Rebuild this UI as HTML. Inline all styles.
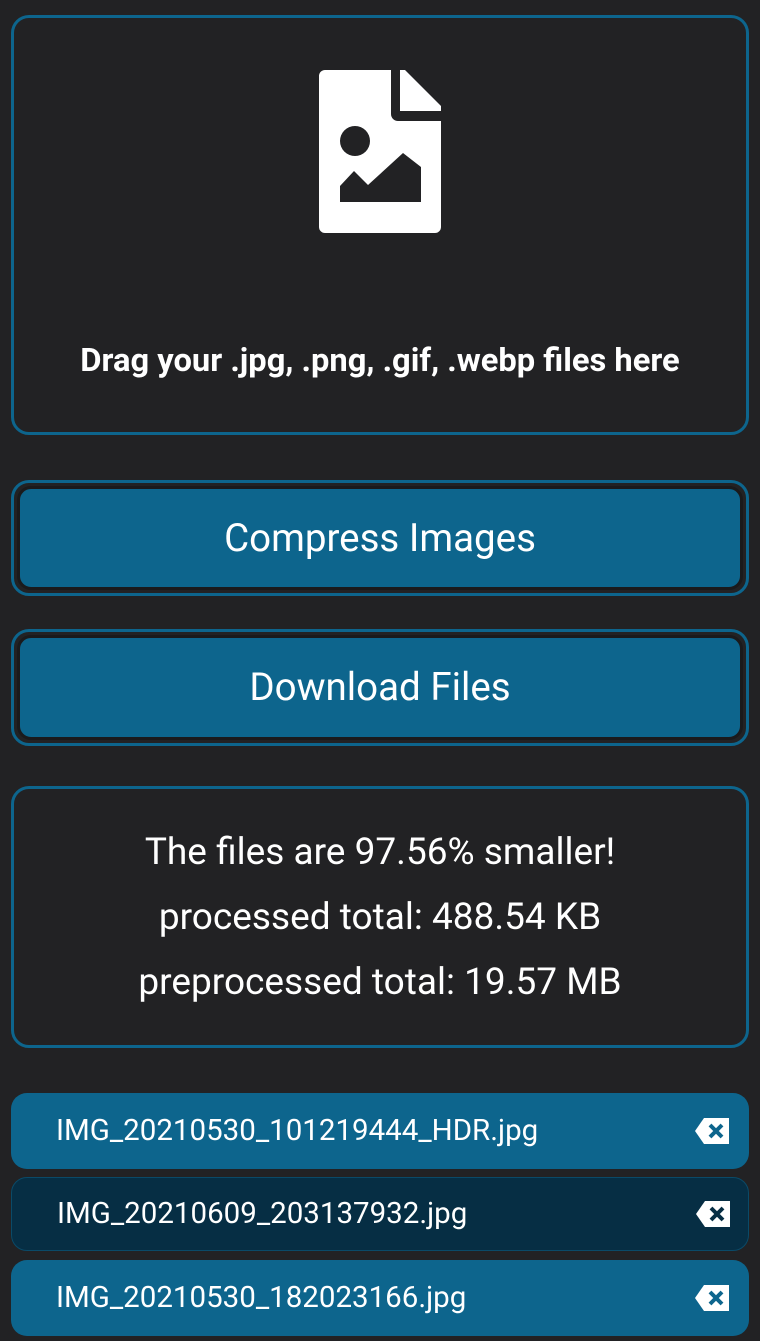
<!DOCTYPE html>
<html><head><meta charset="utf-8"><style>
*{box-sizing:border-box;margin:0;padding:0}
body{width:760px;height:1341px;background:#222224;font-family:Roboto,"Liberation Sans",sans-serif;color:#fff;position:relative;overflow:hidden}
.box{position:absolute;left:11px;width:738px;border:3px solid #0d658d;border-radius:18px}
.btn{position:absolute;left:11px;width:738px;border:3px solid #0d658d;border-radius:18px;padding:3px}
.btn div{background:#0d658d;border:3px solid #1a1a1c;border-radius:14px;height:100%;display:flex;align-items:center;justify-content:center;font-size:38.5px}
.file{position:absolute;left:11px;width:738px;border-radius:16px;background:#0d658d;font-size:29.5px;padding-left:45px;display:flex;align-items:center}
.file svg{position:absolute;left:684px;top:50%;margin-top:-13px}
</style></head><body>
<div class="box" style="top:15px;height:420px">
<svg style="position:absolute;left:305px;top:52px" width="122" height="163" viewBox="0 0 122 163">
<path d="M6 0H72V44a7 7 0 0 0 7 7H122V157a6 6 0 0 1-6 6H6a6 6 0 0 1-6-6V6a6 6 0 0 1 6-6Z" fill="#fff"/>
<path d="M81 0H86L122 36V41H81Z" fill="#fff"/>
<circle cx="36" cy="71" r="15" fill="#222224"/>
<path d="M21 132V116L35 101L49 115L84 83L102 97V132Z" fill="#222224"/>
</svg>
<div style="position:absolute;top:323px;width:100%;text-align:center;font-size:32.7px;font-weight:bold">Drag your .jpg, .png, .gif, .webp files here</div>
</div>
<div class="btn" style="top:480px;height:116px"><div>Compress Images</div></div>
<div class="btn" style="top:629px;height:117px"><div>Download Files</div></div>
<div class="box" style="top:786px;height:262px;text-align:center;font-size:37px;line-height:65px;padding-top:31px">
The files are 97.56% smaller!<br>processed total: 488.54 KB<br>preprocessed total: 19.57 MB</div>
<div class="file" style="top:1093px;height:76px">IMG_20210530_101219444_HDR.jpg<svg width="34" height="26" viewBox="0 0 34 26"><path d="M0 13L9 0H34V26H9Z" fill="#fff"/><path d="M15 7l12 12M27 7L15 19" stroke="#0d658d" stroke-width="4"/></svg></div>
<div class="file" style="top:1177px;height:74px;background:#062e44;border:1px solid #0a4a68">IMG_20210609_203137932.jpg<svg width="34" height="26" viewBox="0 0 34 26"><path d="M0 13L9 0H34V26H9Z" fill="#fff"/><path d="M15 7l12 12M27 7L15 19" stroke="#062e44" stroke-width="4"/></svg></div>
<div class="file" style="top:1260px;height:76px">IMG_20210530_182023166.jpg<svg width="34" height="26" viewBox="0 0 34 26"><path d="M0 13L9 0H34V26H9Z" fill="#fff"/><path d="M15 7l12 12M27 7L15 19" stroke="#0d658d" stroke-width="4"/></svg></div>
</body></html>
